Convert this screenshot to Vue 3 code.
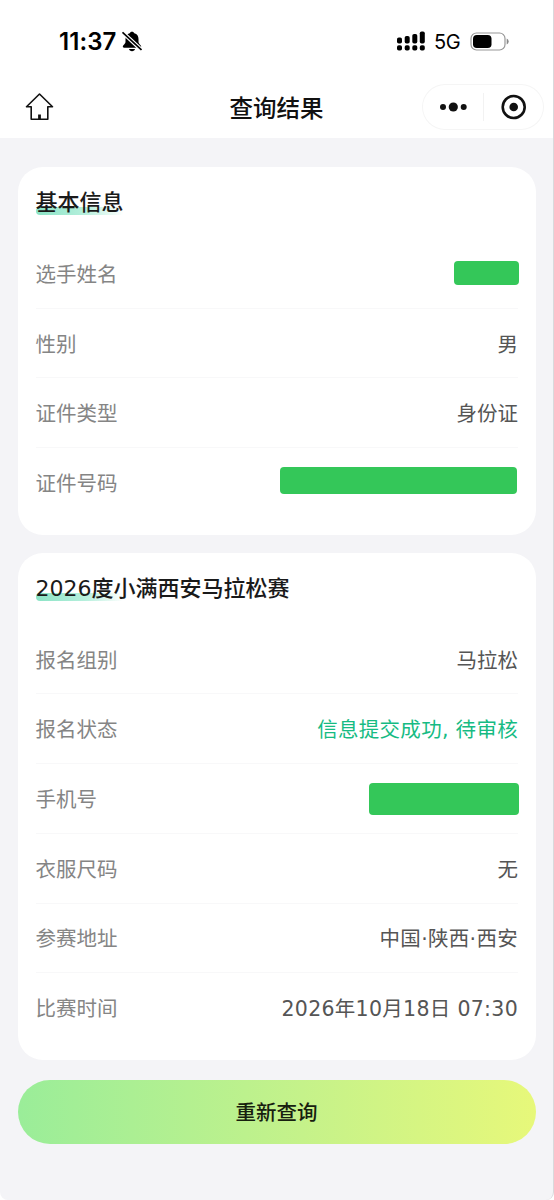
<script setup>
const cards = [
  {
    title: '基本信息',
    rows: [
      { label: '选手姓名', mask: 'name' },
      { label: '性别', value: '男' },
      { label: '证件类型', value: '身份证' },
      { label: '证件号码', mask: 'id' }
    ]
  },
  {
    title: '2026度小满西安马拉松赛',
    rows: [
      { label: '报名组别', value: '马拉松' },
      { label: '报名状态', value: '信息提交成功, 待审核', kind: 'success' },
      { label: '手机号', mask: 'phone' },
      { label: '衣服尺码', value: '无' },
      { label: '参赛地址', value: '中国·陕西·西安', kind: 'place' },
      { label: '比赛时间', value: '2026年10月18日 07:30', kind: 'date' }
    ]
  }
]
</script>

<template>
  <div class="screen">
    <header class="top">
      <div class="status">
        <div class="clock">
          <span class="time">11:37</span>
          <svg class="bell" width="20" height="21" viewBox="0 0 20 21">
            <path d="M10 .7c-1.200 0-2 .6-2.300 1.500C4.800 3 3.500 5.100 3.500 7.900v3.300c0 1.600-2.700 2.700-2.700 4.300 0 .7.5 1.200 1.200 1.200h16c.7 0 1.200-.5 1.200-1.200 0-1.600-2.700-2.700-2.700-4.300V7.900c0-2.800-1.300-4.900-4.200-5.700C12 1.300 11.200.7 10 .7z" />
            <path d="M7 18h6c-.3 1.400-1.400 2.200-3 2.200s-2.700-.8-3-2.200z" />
            <path d="M.5 1.300l19 17.700" stroke="#fff" stroke-width="4" />
            <path d="M.5 1.300l19 17.700" stroke="#000" stroke-width="1.700" />
          </svg>
        </div>
        <div class="indicators">
          <svg width="28" height="20" viewBox="0 0 28 20">
            <rect x="0" y="6.500" width="5" height="6" rx="1.800" />
            <rect x="7.700" y="5" width="5" height="7.500" rx="1.800" />
            <rect x="15.300" y="3" width="5" height="9.500" rx="1.800" />
            <rect x="22.800" y="0.500" width="5" height="12" rx="1.800" />
            <rect x="0" y="14.300" width="5" height="5.200" rx="1.800" />
            <rect x="7.700" y="14.300" width="5" height="5.200" rx="1.800" />
            <rect x="15.300" y="14.300" width="5" height="5.200" rx="1.800" />
            <rect x="22.800" y="14.300" width="5" height="5.200" rx="1.800" />
          </svg>
          <span class="network">5G</span>
          <svg class="battery" width="40" height="20" viewBox="0 0 40 20">
            <rect x="1" y="1" width="34" height="17" rx="5.500" fill="none" stroke="#979797" stroke-width="1.200" />
            <rect x="3" y="3" width="18.500" height="13" rx="3.800" />
            <path d="M36.700 6.600q2 1 2 3t-2 3z" fill="#888" />
          </svg>
        </div>
      </div>
      <nav class="nav">
        <svg class="home" width="30" height="30" viewBox="0 0 30 30" fill="none" stroke="#111" stroke-width="1.600" stroke-linejoin="round">
          <path d="M15.500 2L2.500 14.800H7.200V27.200H23.800V14.800H28.500Z" />
          <path d="M15.500 22.500V27" stroke-width="2.800" />
        </svg>
        <h1>查询结果</h1>
        <div class="capsule">
          <svg width="122" height="46" viewBox="0 0 122 46" fill="#111">
            <circle cx="21" cy="23" r="3" /><circle cx="31.300" cy="23" r="4.600" /><circle cx="41.700" cy="23" r="3" />
            <path d="M61.500 9v28" stroke="#f2f2f2" />
            <circle cx="91.700" cy="23" r="11" fill="none" stroke="#111" stroke-width="2.600" />
            <circle cx="91.700" cy="23" r="4.300" />
          </svg>
        </div>
      </nav>
    </header>
    <main>
      <section v-for="card in cards" :key="card.title" class="card">
        <h2><span>{{ card.title }}</span></h2>
        <div v-for="row in card.rows" :key="row.label" class="row">
          <span class="label">{{ row.label }}</span>
          <span v-if="row.mask" class="mask" :class="row.mask"></span>
          <span v-else class="value" :class="row.kind">{{ row.value }}</span>
        </div>
      </section>
      <button>重新查询</button>
    </main>
  </div>
</template>

<style>
body { margin: 0; background: #fff; }
</style>

<style scoped>
.screen {
  box-sizing: border-box;
  width: 554px;
  height: 1200px;
  overflow: hidden;
  border-right: 1px solid #d9d9dc;
  border-radius: 0 0 8px 8px;
  background: #f4f4f7;
  font-family: "DejaVu Sans", "Noto Sans CJK SC", sans-serif;
}
.top { height: 138px; background: #fff; }
.status { display: flex; justify-content: space-between; height: 76px; }
.clock { display: flex; padding: 27px 0 0 59px; }
.time { width: 63px; font: 600 24px/29px Inter, sans-serif; letter-spacing: .1px; white-space: nowrap; }
.bell { margin-top: 4px; }
.indicators { display: flex; padding: 31px 43px 0 0; }
.network { width: 27px; margin: -2px 9px 0 9px; font: 400 20px/26px Inter, sans-serif; letter-spacing: -.4px; }
.battery { margin-top: 1px; }
.nav { display: grid; grid-template-columns: 130px 1fr 130px; align-items: center; height: 62px; }
.home { margin-left: 24px; }
h1 { margin: 3px 0 0; text-align: center; font-size: 23.500px; font-weight: 500; line-height: 34px; color: #111; }
.capsule { box-sizing: border-box; width: 122px; height: 46px; margin-left: -1px; border-radius: 23px; box-shadow: inset 0 0 0 1px #f5f5f5; }
.capsule svg { display: block; }
main { padding: 29px 17px 0 18px; }
.card { box-sizing: border-box; margin-bottom: 18px; padding: 18px 18px 17px; border-radius: 25px; background: #fff; }
h2 { height: 35px; margin: 0 0 19px; font-size: 22px; line-height: 35px; font-weight: 500; color: #1a1a1a; }
h2 span { position: relative; display: inline-block; z-index: 0; margin-left: -.5px; white-space: nowrap; }
h2 span::before {
  content: "";
  position: absolute;
  z-index: -1;
  left: 0;
  bottom: 5px;
  width: 88px;
  height: 8px;
  border-radius: 4px;
  background: linear-gradient(90deg, #8be3c5, #b5efdc 55%, #fff);
}
.row { box-sizing: border-box; display: flex; align-items: center; justify-content: space-between; height: 69.700px; border-bottom: 1px solid #f8f8f9; font-size: 20.500px; }
.row:last-child { border-bottom-color: transparent; }
.label { margin: -1px 0 0 -.5px; color: #858585; }
.value { margin-top: -1px; color: #555; }
.success { color: #16bb83; letter-spacing: .3px; }
.place { letter-spacing: .3px; }
.date { margin-top: -2px; letter-spacing: .3px; }
.mask { flex: none; border-radius: 4px; background: #34c759; }
.name { width: 65px; height: 24px; margin-right: -1px; }
.id { width: 237px; height: 27px; margin: -3px 1px 0 0; }
.phone { width: 150px; height: 32px; margin: 2px -1px 0 0; }
button {
  display: block;
  width: 100%;
  height: 64px;
  margin-top: 20px;
  padding: 0 1px 2px 0;
  border: 0;
  border-radius: 32px;
  background: linear-gradient(90deg, #9aed99, #c5f28a 55%, #e7f87a);
  color: #17200f;
  font: 500 20.500px/62px "Noto Sans CJK SC", sans-serif;
}
</style>
